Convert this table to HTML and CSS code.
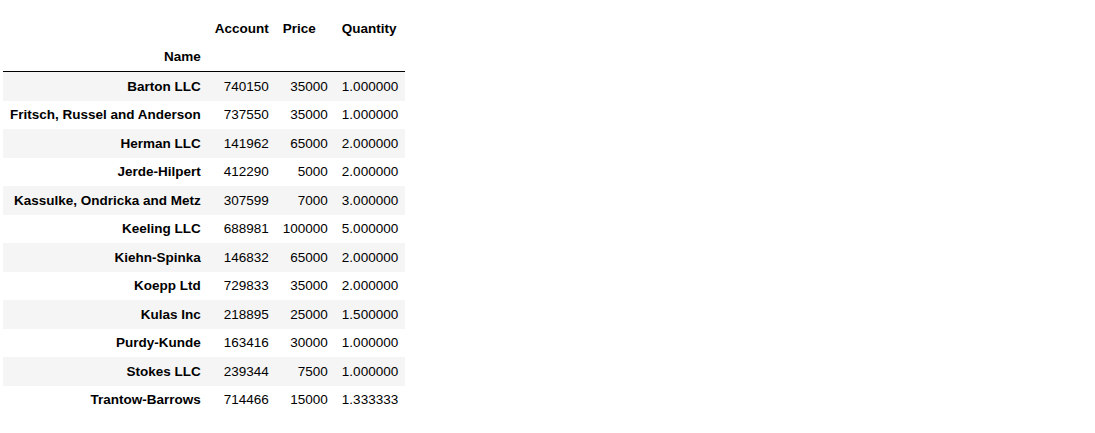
FILE: index.html
```html
<!DOCTYPE html>
<html>
<head>
<meta charset="utf-8">
<link rel="stylesheet" href="styles.css">
</head>
<body>
<div class="output">
<table class="dataframe">
  <thead>
    <tr class="cols"><th></th><th>Account</th><th>Price</th><th>Quantity</th></tr>
    <tr><th>Name</th><th></th><th></th><th></th></tr>
  </thead>
  <tbody>
    <tr><th>Barton LLC</th><td>740150</td><td>35000</td><td>1.000000</td></tr>
    <tr><th>Fritsch, Russel and Anderson</th><td>737550</td><td>35000</td><td>1.000000</td></tr>
    <tr><th>Herman LLC</th><td>141962</td><td>65000</td><td>2.000000</td></tr>
    <tr><th>Jerde-Hilpert</th><td>412290</td><td>5000</td><td>2.000000</td></tr>
    <tr><th>Kassulke, Ondricka and Metz</th><td>307599</td><td>7000</td><td>3.000000</td></tr>
    <tr><th>Keeling LLC</th><td>688981</td><td>100000</td><td>5.000000</td></tr>
    <tr><th>Kiehn-Spinka</th><td>146832</td><td>65000</td><td>2.000000</td></tr>
    <tr><th>Koepp Ltd</th><td>729833</td><td>35000</td><td>2.000000</td></tr>
    <tr><th>Kulas Inc</th><td>218895</td><td>25000</td><td>1.500000</td></tr>
    <tr><th>Purdy-Kunde</th><td>163416</td><td>30000</td><td>1.000000</td></tr>
    <tr><th>Stokes LLC</th><td>239344</td><td>7500</td><td>1.000000</td></tr>
    <tr><th>Trantow-Barrows</th><td>714466</td><td>15000</td><td>1.333333</td></tr>
  </tbody>
</table>
</div>
</body>
</html>
```

FILE: styles.css
```css
html, body {
  margin: 0;
  padding: 0;
  background: #ffffff;
}
.output {
  padding: 14px 0 0 3px;
}
.dataframe {
  border-collapse: collapse;
  border-spacing: 0;
  border: none;
  font-family: "Liberation Sans", Arial, sans-serif;
  font-size: 13.5px;
  color: #000000;
}
.dataframe th,
.dataframe td {
  text-align: right;
  vertical-align: middle;
  padding: 6.5px 7px;
  line-height: 15.5px;
  white-space: nowrap;
  border: none;
}
.dataframe th {
  font-weight: bold;
}
.dataframe .cols th {
  text-align: left;
}
.dataframe thead {
  border-bottom: 1px solid #000000;
}
.dataframe tbody tr:nth-child(odd) {
  background: #f5f5f5;
}
```
